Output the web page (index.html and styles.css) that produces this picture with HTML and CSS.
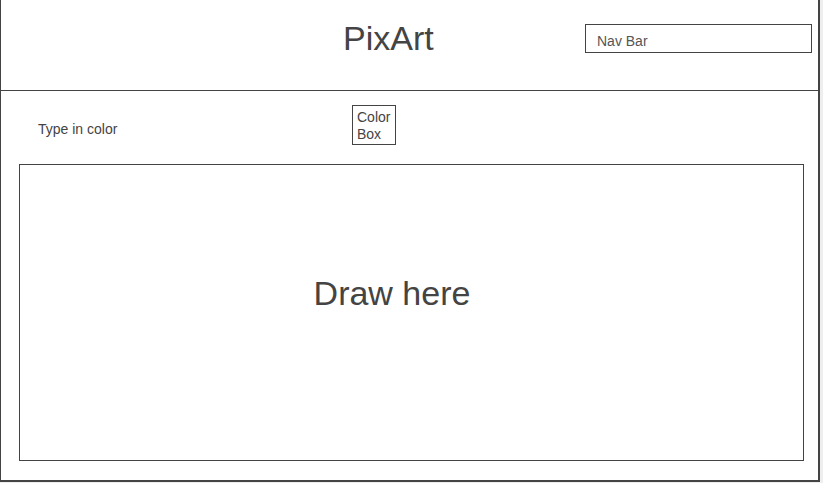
FILE: index.html
```html
<!DOCTYPE html>
<html lang="en">
<head>
<meta charset="utf-8">
<title>PixArt</title>
<link rel="stylesheet" href="styles.css">
</head>
<body>
<div class="frame">
  <header class="header">
    <h1 class="title">PixArt</h1>
    <nav class="navbar">Nav Bar</nav>
  </header>
  <main class="main">
    <div class="color-row">
      <div class="color-label">Type in color</div>
      <div class="color-box">Color<br>Box</div>
    </div>
    <div class="canvas">
      <span class="canvas-text">Draw here</span>
    </div>
  </main>
</div>
</body>
</html>
```

FILE: styles.css
```css
html, body {
  margin: 0;
  padding: 0;
  background: #eeeeee;
}
body {
  font-family: "Liberation Sans", Arial, sans-serif;
  color: #444;
  width: 823px;
  height: 483px;
  overflow: hidden;
}
.frame {
  box-sizing: border-box;
  width: 820px;
  height: 482px;
  background: #fff;
  border-left: 1px solid #444;
  border-right: 2px solid #444;
  border-bottom: 2px solid #444;
  display: flex;
  flex-direction: column;
}
.header {
  height: 90px;
  border-bottom: 1px solid #444;
  display: flex;
  align-items: flex-start;
}
.title {
  margin: 18px 0 0 342px;
  font-size: 34px;
  line-height: 40px;
  font-weight: normal;
  color: #444;
}
.navbar {
  box-sizing: border-box;
  margin: 24px 0 0 auto;
  margin-right: 6px;
  width: 227px;
  height: 29px;
  border: 1px solid #444;
  padding: 8px 0 0 11px;
  font-size: 14px;
  line-height: 16px;
  color: #555;
}
.main {
  flex: 1;
  display: flex;
  flex-direction: column;
}
.color-row {
  display: flex;
  align-items: flex-start;
  padding: 14px 0 0 37px;
}
.color-label {
  width: 314px;
  margin-top: 16px;
  font-size: 14px;
  line-height: 16px;
  color: #444;
}
.color-box {
  box-sizing: border-box;
  width: 44px;
  height: 40px;
  border: 1px solid #444;
  padding: 3px 0 0 4px;
  font-size: 14px;
  line-height: 17px;
  color: #444;
}
.canvas {
  box-sizing: border-box;
  margin: 19px 0 0 18px;
  width: 785px;
  height: 297px;
  border: 1px solid #444;
  display: flex;
  align-items: center;
  justify-content: center;
  padding: 0 39px 40px 0;
}
.canvas-text {
  font-size: 34px;
  line-height: 40px;
  color: #444;
}
```
